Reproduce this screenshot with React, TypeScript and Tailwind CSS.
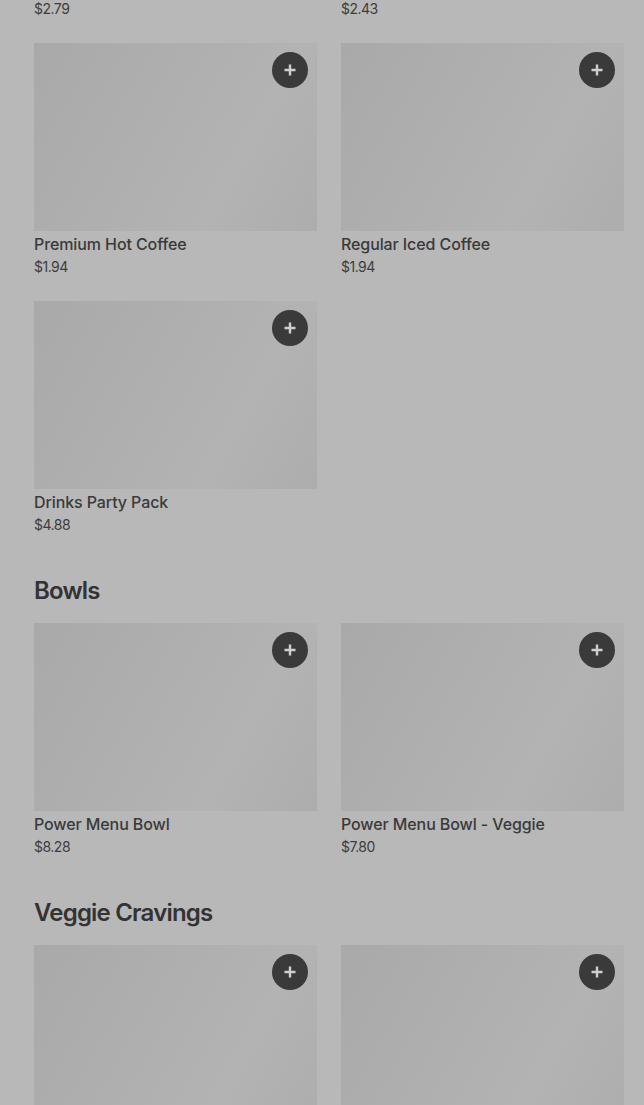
import React from "react";

type Item = { name: string; price: string };

const Plus = () => (
  <svg width="14" height="14" viewBox="0 0 14 14" fill="none">
    <path d="M7 1.5v11M1.5 7h11" stroke="#cfcfcf" strokeWidth="2.4" strokeLinecap="butt" />
  </svg>
);

const Thumb = () => (
  <div className="relative h-[188px] w-full bg-[linear-gradient(120deg,#a9a9a9_0%,#aeaeae_35%,#b3b3b3_70%,#adadad_100%)]">
    <button className="absolute right-[9px] top-[9px] flex h-9 w-9 items-center justify-center rounded-full bg-[#3a3a3a]">
      <Plus />
    </button>
  </div>
);

const Card = ({ item }: { item?: Item }) => (
  <div className="flex flex-col">
    <Thumb />
    {item && (
      <>
        <div className="mt-[2px] text-[16px] font-medium leading-[22px] tracking-[-0.1px] text-[#3a3a3a]">{item.name}</div>
        <div className="mt-[2px] text-[14px] leading-[20px] tracking-[-0.5px] text-[#3d3d3d]">{item.price}</div>
      </>
    )}
  </div>
);

const Grid = ({ items }: { items: (Item | undefined)[] }) => (
  <div className="grid grid-cols-2 gap-x-6 gap-y-6">
    {items.map((it, i) => (
      <Card key={i} item={it} />
    ))}
  </div>
);

const Heading = ({ children }: { children: React.ReactNode }) => (
  <h2 className="mb-4 mt-10 text-[24px] font-semibold leading-[32px] tracking-[-0.8px] text-[#333333]">{children}</h2>
);

export default function App() {
  return (
    <div
      className="h-[1105px] w-[644px] overflow-hidden bg-[#b8b8b8] pl-[34px] pr-[20px]"
      style={{ fontFamily: "Inter, 'Noto Sans', sans-serif" }}
    >
      <div className="grid grid-cols-2 gap-x-6">
        <div className="-mt-px text-[14px] leading-[20px] tracking-[-0.5px] text-[#3d3d3d]">$2.79</div>
        <div className="-mt-px text-[14px] leading-[20px] tracking-[-0.5px] text-[#3d3d3d]">$2.43</div>
      </div>
      <div className="mt-6">
        <Grid
          items={[
            { name: "Premium Hot Coffee", price: "$1.94" },
            { name: "Regular Iced Coffee", price: "$1.94" },
            { name: "Drinks Party Pack", price: "$4.88" },
          ]}
        />
      </div>
      <Heading>Bowls</Heading>
      <Grid
        items={[
          { name: "Power Menu Bowl", price: "$8.28" },
          { name: "Power Menu Bowl - Veggie", price: "$7.80" },
        ]}
      />
      <Heading>Veggie Cravings</Heading>
      <Grid items={[undefined, undefined]} />
    </div>
  );
}
